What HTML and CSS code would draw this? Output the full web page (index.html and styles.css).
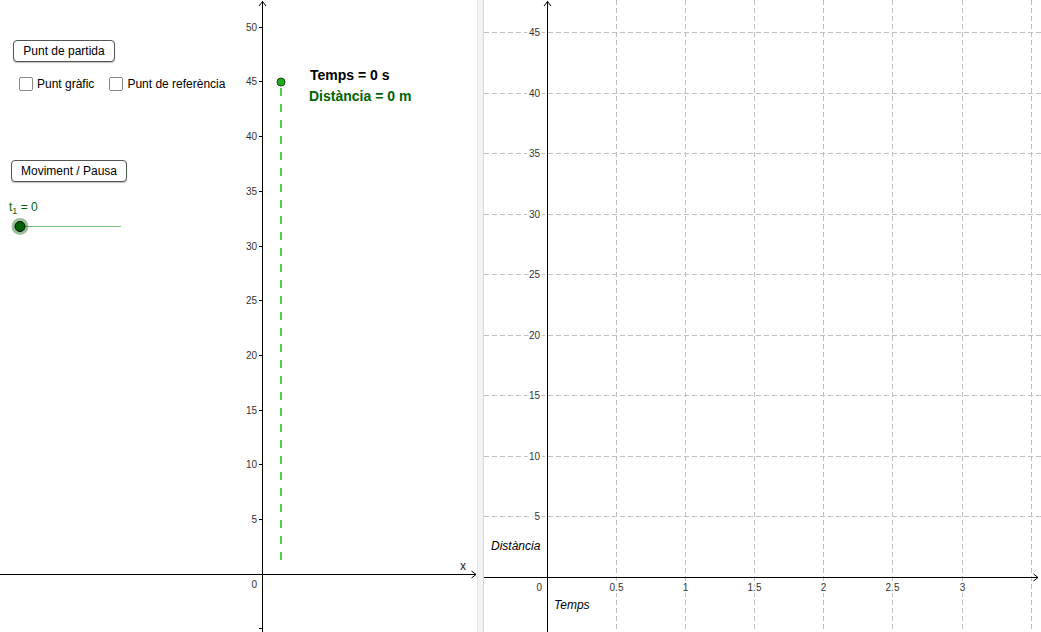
FILE: index.html
```html
<!DOCTYPE html>
<html>
<head>
<meta charset="utf-8">
<link rel="stylesheet" href="styles.css">
</head>
<body>
<div class="app">
  <div class="panel left">
    <svg class="canvas" width="477" height="632" viewBox="0 0 477 632">
      <g class="axis">
        <line x1="262.5" y1="1" x2="262.5" y2="632"/>
        <polyline class="arrow" points="259,6 262.5,1.5 266,6"/>
        <line x1="0" y1="574.5" x2="476" y2="574.5"/>
        <polyline class="arrow" points="471.5,571 476,574.5 471.5,578"/>
        <line x1="259" y1="519.5" x2="262" y2="519.5"/>
        <line x1="259" y1="464.5" x2="262" y2="464.5"/>
        <line x1="259" y1="410.5" x2="262" y2="410.5"/>
        <line x1="259" y1="355.5" x2="262" y2="355.5"/>
        <line x1="259" y1="300.5" x2="262" y2="300.5"/>
        <line x1="259" y1="246.5" x2="262" y2="246.5"/>
        <line x1="259" y1="191.5" x2="262" y2="191.5"/>
        <line x1="259" y1="136.5" x2="262" y2="136.5"/>
        <line x1="259" y1="81.5" x2="262" y2="81.5"/>
        <line x1="259" y1="27.5" x2="262" y2="27.5"/>
        <line x1="259" y1="628.5" x2="262" y2="628.5"/>
      </g>
      <g class="lbl">
        <text x="257" y="523">5</text>
        <text x="257" y="468">10</text>
        <text x="257" y="414">15</text>
        <text x="257" y="359">20</text>
        <text x="257" y="304">25</text>
        <text x="257" y="250">30</text>
        <text x="257" y="195">35</text>
        <text x="257" y="140">40</text>
        <text x="257" y="85">45</text>
        <text x="257" y="31">50</text>
        <text x="257" y="588">0</text>
      </g>
      <text class="xlab" x="460" y="570">x</text>
      <line class="trace" x1="281" y1="88" x2="281" y2="568"/>
      <circle class="pt" cx="281" cy="82" r="4"/>
      <text class="t-temps" x="310" y="80">Temps = 0 s</text>
      <text class="t-dist" x="309" y="101">Distància = 0 m</text>
      <g class="slider">
        <line class="track" x1="20" y1="226.5" x2="121" y2="226.5"/>
        <circle class="halo" cx="20" cy="226.5" r="8.5"/>
        <circle class="knob" cx="20" cy="226.5" r="5"/>
      </g>
    </svg>
    <div class="controls">
      <button class="btn btn-start">Punt de partida</button>
      <div class="checks">
        <label class="chk"><span class="box"></span>Punt gràfic</label>
        <label class="chk"><span class="box"></span>Punt de referència</label>
      </div>
      <button class="btn btn-move">Moviment / Pausa</button>
      <div class="tval">t<sub>1</sub> = 0</div>
    </div>
  </div>
  <div class="divider"></div>
  <div class="panel right">
    <svg class="canvas" width="557" height="632" viewBox="0 0 557 632">
      <g class="grid">
        <line x1="0" y1="32.5" x2="557" y2="32.5"/>
        <line x1="0" y1="93" x2="557" y2="93"/>
        <line x1="0" y1="153.5" x2="557" y2="153.5"/>
        <line x1="0" y1="214" x2="557" y2="214"/>
        <line x1="0" y1="274.5" x2="557" y2="274.5"/>
        <line x1="0" y1="335" x2="557" y2="335"/>
        <line x1="0" y1="395.5" x2="557" y2="395.5"/>
        <line x1="0" y1="456" x2="557" y2="456"/>
        <line x1="0" y1="516.5" x2="557" y2="516.5"/>
        <line x1="132.5" y1="0" x2="132.5" y2="632"/>
        <line x1="201.5" y1="0" x2="201.5" y2="632"/>
        <line x1="270.5" y1="0" x2="270.5" y2="632"/>
        <line x1="339.5" y1="0" x2="339.5" y2="632"/>
        <line x1="408.5" y1="0" x2="408.5" y2="632"/>
        <line x1="478.5" y1="0" x2="478.5" y2="632"/>
        <line x1="547.5" y1="0" x2="547.5" y2="632"/>
      </g>
      <g class="lbl halo-lbl">
        <text x="56" y="36">45</text>
        <text x="56" y="96.5">40</text>
        <text x="56" y="157">35</text>
        <text x="56" y="217.5">30</text>
        <text x="56" y="278">25</text>
        <text x="56" y="338.5">20</text>
        <text x="56" y="399">15</text>
        <text x="56" y="459.5">10</text>
        <text x="56" y="520">5</text>
        <text x="58" y="591">0</text>
      </g>
      <g class="lbl mid halo-lbl">
        <text x="132.5" y="591">0.5</text>
        <text x="201.5" y="591">1</text>
        <text x="270.5" y="591">1.5</text>
        <text x="339.5" y="591">2</text>
        <text x="408.5" y="591">2.5</text>
        <text x="478.5" y="591">3</text>
      </g>
      <g class="axis">
        <line x1="63.5" y1="1" x2="63.5" y2="632"/>
        <polyline class="arrow" points="60,6 63.5,1.5 67,6"/>
        <line x1="0" y1="577.5" x2="554" y2="577.5"/>
        <polyline class="arrow" points="549.5,574 554,577.5 549.5,581"/>
      </g>
      <text class="ital" x="7" y="550">Distància</text>
      <text class="ital" x="70" y="609">Temps</text>
    </svg>
  </div>
</div>
</body>
</html>
```

FILE: styles.css
```css
html, body {
  margin: 0;
  padding: 0;
  background: #ffffff;
}
body {
  font-family: "Liberation Sans", Arial, sans-serif;
  width: 1041px;
  height: 632px;
  overflow: hidden;
}
.app {
  display: flex;
  width: 1041px;
  height: 632px;
}
.panel {
  position: relative;
  height: 632px;
  background: #ffffff;
}
.left { width: 477px; }
.right { width: 557px; }
.divider {
  width: 5px;
  background: #f3f3f3;
  border-left: 1px solid #e6e6e6;
  border-right: 1px solid #d6d6d6;
}
.canvas {
  display: block;
  font-family: "Liberation Sans", Arial, sans-serif;
}
.axis line {
  stroke: #000;
  stroke-width: 1;
  shape-rendering: crispEdges;
}
.axis .arrow {
  fill: none;
  stroke: #000;
  stroke-width: 1;
}
.grid line {
  stroke: #c0c0c0;
  stroke-width: 1;
  stroke-dasharray: 5 3;
  shape-rendering: crispEdges;
}
.lbl text {
  font-size: 10px;
  fill: #333;
  text-anchor: end;
}
.lbl.mid text { text-anchor: middle; }
.halo-lbl text {
  stroke: #fff;
  stroke-width: 4px;
  paint-order: stroke;
}
.xlab {
  font-size: 12px;
  fill: #222;
}
.trace {
  stroke: #00c000;
  stroke-width: 1.4;
  stroke-dasharray: 8 8;
}
.pt {
  fill: #22aa22;
  stroke: #114411;
  stroke-width: 1;
}
.t-temps {
  font-size: 14px;
  font-weight: bold;
  fill: #000;
}
.t-dist {
  font-size: 14px;
  font-weight: bold;
  fill: #006400;
}
.ital {
  font-size: 12px;
  font-style: italic;
  fill: #000;
}
.track {
  stroke: #7fbf7f;
  stroke-width: 1;
}
.halo {
  fill: #006400;
  opacity: 0.4;
}
.knob {
  fill: #006400;
  stroke: #000;
  stroke-width: 1;
}
.controls {
  position: absolute;
  top: 40px;
  left: 11px;
  display: flex;
  flex-direction: column;
  align-items: flex-start;
}
.btn {
  font-family: "Liberation Sans", Arial, sans-serif;
  font-size: 12px;
  color: #000;
  background: #fff;
  border: 1px solid #555;
  border-radius: 4px;
  box-shadow: 0 1px 1px rgba(0,0,0,0.25);
  height: 22px;
  padding: 0 6px;
  margin: 0;
}
.btn-start { margin-left: 2px; width: 102px; }
.btn-move { margin-top: 69px; width: 116px; }
.checks {
  display: flex;
  gap: 15px;
  margin-top: 15px;
  margin-left: 8px;
  height: 14px;
}
.chk {
  display: flex;
  align-items: center;
  font-size: 12px;
  line-height: 14px;
  color: #000;
}
.box {
  width: 12px;
  height: 12px;
  border: 1px solid #888;
  border-radius: 2px;
  background: #fff;
  margin-right: 4px;
}
.tval {
  margin-top: 18px;
  margin-left: -2px;
  font-size: 12px;
  line-height: 14px;
  color: #006400;
}
.tval sub {
  font-size: 9px;
  vertical-align: -3px;
}
```
